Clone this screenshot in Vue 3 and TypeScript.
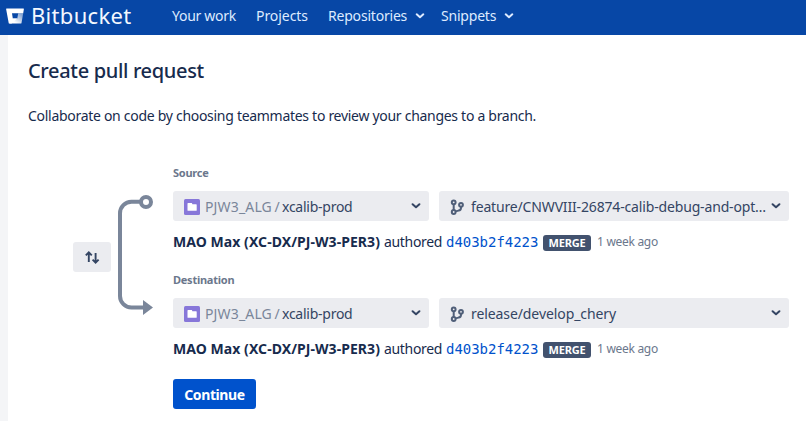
<script setup lang="ts">
interface Branch {
  id: string
  label: string
  project: string
  repo: string
  branch: string
  author: string
  commit: string
  age: string
}

const shared = {
  project: 'PJW3_ALG',
  repo: 'xcalib-prod',
  author: 'MAO Max (XC-DX/PJ-W3-PER3)',
  commit: 'd403b2f4223',
  age: '1 week ago',
}

const branches: Branch[] = [
  { id: 'source', label: 'Source', branch: 'feature/CNWVIII-26874-calib-debug-and-opt…', ...shared },
  { id: 'destination', label: 'Destination', branch: 'release/develop_chery', ...shared },
]
</script>

<template>
  <div class="app">
    <header class="topbar">
      <svg class="logo" width="18" height="16" viewBox="0 0 18 17" preserveAspectRatio="none">
        <defs>
          <linearGradient id="bucket" x1="1" y1="0.2" x2="0.35" y2="0.85">
            <stop offset="0" stop-color="#fff" stop-opacity="0.5" />
            <stop offset="1" stop-color="#fff" />
          </linearGradient>
        </defs>
        <path fill="#fff" d="M.6.5h16.8c.4 0 .6.3.5.6L17.2 5.600H6l.8 5.500h4.500l-5.800 5.400H3.400c-.4 0-.7-.2-.7-.6L.1 1.100C0 .8.200.5.600.5z" />
        <path fill="url(#bucket)" d="M12.200 5.600h5L15.500 15.900c-.1.400-.4.600-.7.600H3.400l3.400-5.400h4.500z" />
      </svg>
      <span class="brand">Bitbucket</span>
      <nav class="nav">
        <a class="your-work">Your work</a>
        <a class="projects">Projects</a>
        <a class="repositories">Repositories</a>
        <svg class="nav-chevron" width="10" height="6" viewBox="0 0 10 6"><path d="M1.700 1.300 5 4.200 8.300 1.300" /></svg>
        <a class="snippets">Snippets</a>
        <svg class="nav-chevron" width="10" height="6" viewBox="0 0 10 6"><path d="M1.700 1.300 5 4.200 8.300 1.300" /></svg>
      </nav>
    </header>

    <main class="page">
      <h1>Create pull request</h1>
      <p class="intro">Collaborate on code by choosing teammates to review your changes to a branch.</p>

      <div class="form">
        <button class="swap" type="button" aria-label="Swap">
          <svg width="16" height="14" viewBox="0 0 16 14">
            <path d="M4.800 12V2.400M1.800 5.400 4.800 2.400 7.800 5.400M11.600 3v9.600M8.600 9.600l3 3 3-3" />
          </svg>
        </button>
        <svg class="connector" width="37" height="122" viewBox="0 0 37 122">
          <path class="line" d="M25 8.700H15.500A11.500 11.500 0 0 0 4 20.200V103A11.500 11.500 0 0 0 15.500 114.500H28" />
          <circle cx="30" cy="9" r="5" />
          <path class="head" d="M27 107l10 7.500-10 7.500z" />
        </svg>

        <div class="fields">
          <section v-for="b in branches" :key="b.id" class="side" :class="b.id">
            <label>{{ b.label }}</label>
            <div class="selects">
              <div class="select repo">
                <svg class="folder" width="16" height="16" viewBox="0 0 16 16">
                  <rect width="16" height="16" rx="1.500" fill="#8777D9" />
                  <path fill="#fff" d="M3.500 4.500c0-.4.200-.6.600-.6h3.300c.300 0 .500.200.600.400l.400.900h3.700c.4 0 .6.200.6.600v5.400c0 .4-.2.600-.6.600h-8c-.4 0-.6-.2-.6-.6z" />
                </svg>
                <span class="project">{{ b.project }}</span>
                <span class="slash">/</span>
                <span class="name">{{ b.repo }}</span>
                <svg class="chevron" width="10" height="6" viewBox="0 0 10 6"><path d="M1.600 1.200 5 4.300 8.400 1.200" /></svg>
              </div>
              <div class="select branch">
                <svg class="fork" width="14" height="16" viewBox="0 0 14 16">
                  <circle cx="3.700" cy="3.300" r="1.900" />
                  <circle cx="3.700" cy="13" r="1.900" />
                  <circle cx="11" cy="5.800" r="1.900" />
                  <path d="M3.700 5.200v5.900M11 7.700v1.200c0 1.700-1 2.400-2.500 2.700L5.600 12.400" />
                </svg>
                <span class="branch-name">{{ b.branch }}</span>
                <svg class="chevron" width="10" height="6" viewBox="0 0 10 6"><path d="M1.600 1.200 5 4.300 8.400 1.200" /></svg>
              </div>
            </div>
            <div class="commit">
              <strong>{{ b.author }}</strong>
              <span class="authored">authored</span>
              <a class="hash">{{ b.commit }}</a>
              <span class="badge">MERGE</span>
              <span class="age">{{ b.age }}</span>
            </div>
          </section>
          <button class="continue" type="button">Continue</button>
        </div>
      </div>
    </main>
  </div>
</template>

<style>
body {
  background: #fff;
  overflow: hidden;
}
</style>

<style scoped>
.app {
  box-sizing: border-box;
  height: 421px;
  display: flex;
  flex-direction: column;
  overflow: hidden;
  font-family: 'Noto Sans', sans-serif;
  font-size: 14px;
  line-height: 20px;
  color: #172b4d;
  white-space: nowrap;
}
button {
  border: 0;
  padding: 0;
  font: inherit;
}
.topbar {
  flex: none;
  height: 35px;
  box-sizing: border-box;
  padding: 0 0 4px 6px;
  display: flex;
  align-items: center;
  background: #0747a6;
  color: #deebff;
}
.logo {
  margin: 1px 7px 0 0;
}
.brand {
  width: 141px;
  padding-bottom: 2px;
  font-size: 22px;
  letter-spacing: 0.3px;
  color: #f4f8ff;
}
.nav {
  display: flex;
  align-items: center;
}
.your-work {
  width: 84px;
  letter-spacing: -0.28px;
}
.projects {
  width: 72px;
  letter-spacing: -0.05px;
}
.repositories {
  width: 87px;
  letter-spacing: -0.2px;
}
.snippets {
  width: 63px;
  margin-left: 16px;
  letter-spacing: -0.2px;
}
.nav-chevron path,
.chevron path {
  fill: none;
  stroke: currentColor;
  stroke-width: 2;
  stroke-linecap: round;
  stroke-linejoin: round;
}
.page {
  flex: 1;
  border-left: 8px solid #f4f5f7;
  padding: 23px 17px 0 20px;
}
h1 {
  margin: 0;
  font-size: 20px;
  line-height: 26px;
  font-weight: 500;
  letter-spacing: -0.34px;
}
.intro {
  margin: 22px 0 38px;
  letter-spacing: -0.29px;
}
.form {
  display: flex;
  align-items: flex-start;
}
.swap {
  width: 38px;
  height: 30px;
  margin: 78px 7px 0 45px;
  display: flex;
  align-items: center;
  justify-content: center;
  border-radius: 3px;
  background: #ebecf0;
}
.swap path {
  fill: none;
  stroke: #344563;
  stroke-width: 1.9;
}
.connector {
  flex: none;
  margin: 29px 20px 0 -2px;
}
.connector .line {
  fill: none;
  stroke: #7a869a;
  stroke-width: 4;
}
.connector circle {
  fill: #fff;
  stroke: #7a869a;
  stroke-width: 4;
}
.connector .head {
  fill: #7a869a;
}
.side {
  height: 107px;
}
label {
  display: block;
  height: 18px;
  margin-bottom: 9px;
  font-size: 11px;
  line-height: 18px;
  font-weight: 700;
  letter-spacing: -0.25px;
  color: #6b778c;
}
.selects {
  display: flex;
  gap: 10px;
}
.select {
  box-sizing: border-box;
  height: 30px;
  display: flex;
  align-items: center;
  padding: 1px 8px 0 11px;
  border-radius: 3px;
  background: #ebecf0;
  color: #344563;
}
.repo {
  width: 256px;
}
.branch {
  width: 350px;
}
.folder {
  margin-right: 5px;
}
.project {
  width: 69.500px;
  letter-spacing: 0.15px;
  color: #7a869a;
}
.slash {
  width: 7.500px;
  color: #7a869a;
}
.name {
  letter-spacing: -0.25px;
}
.chevron {
  margin: 0 0 2px auto;
}
.fork {
  margin-right: 7px;
}
.fork circle,
.fork path {
  fill: none;
  stroke: #505f79;
  stroke-width: 2;
}
.branch-name {
  letter-spacing: -0.16px;
}
.destination .branch-name {
  letter-spacing: -0.09px;
}
.commit {
  display: flex;
  align-items: center;
  height: 20px;
  margin-top: 11px;
}
strong {
  width: 211px;
  letter-spacing: 0.06px;
}
.authored {
  width: 62px;
  letter-spacing: -0.33px;
}
.hash {
  width: 97px;
  font-family: 'DejaVu Sans Mono', monospace;
  letter-spacing: -0.03px;
  color: #0052cc;
}
.badge {
  width: 48px;
  height: 16px;
  margin: 2px 6px 0 0;
  border-radius: 3px;
  background: #42526e;
  color: #fff;
  font-size: 11px;
  line-height: 16px;
  font-weight: 700;
  letter-spacing: -0.2px;
  text-align: center;
}
.age {
  font-size: 12px;
  letter-spacing: -0.3px;
  color: #6b778c;
}
.continue {
  display: block;
  width: 83px;
  height: 30px;
  margin-top: 1px;
  padding-top: 1px;
  border-radius: 3px;
  background: #0052cc;
  color: #fff;
  font-weight: 700;
  letter-spacing: -0.4px;
}
</style>
